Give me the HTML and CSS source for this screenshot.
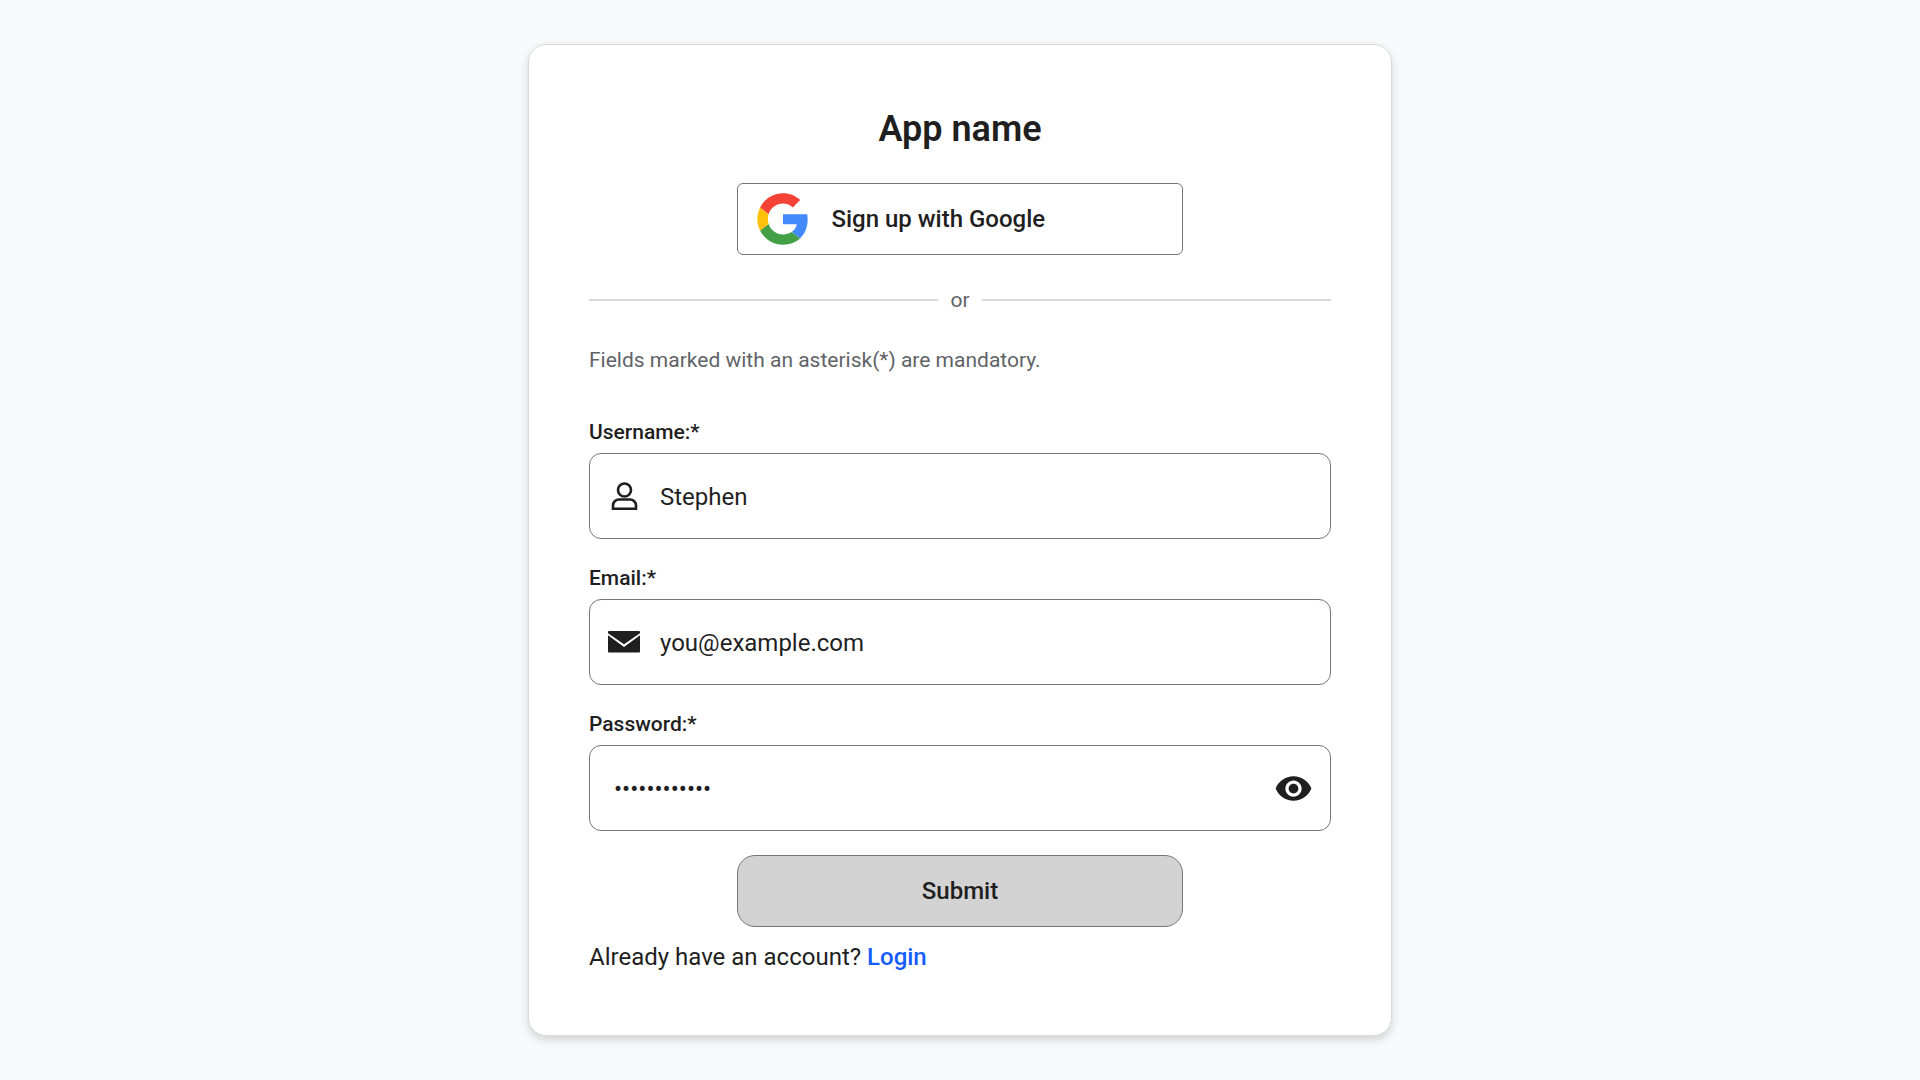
FILE: index.html
```html
<!DOCTYPE html>
<html lang="en">
<head>
<meta charset="utf-8">
<meta name="viewport" content="width=device-width, initial-scale=1">
<title>Sign up</title>
<link rel="stylesheet" href="styles.css">
</head>
<body>
<main class="card">
  <h1 class="title">App name</h1>
  <button class="google" type="button">
    <svg class="google-logo" viewBox="0 0 24 24" aria-hidden="true">
      <path fill="#448aff" d="M22.56 12.25c0-.78-.07-1.53-.2-2.25H12v4.26h5.92c-.26 1.37-1.04 2.53-2.21 3.31l3.57 2.77c2.08-1.92 3.28-4.74 3.28-8.09z"/>
      <path fill="#43a047" d="M12 23c2.97 0 5.46-.98 7.28-2.66l-3.57-2.77c-.98.66-2.23 1.06-3.71 1.06-2.86 0-5.29-1.93-6.16-4.53L2.18 16.93C3.99 20.53 7.7 23 12 23z"/>
      <path fill="#ffc107" d="M5.84 14.09c-.22-.66-.35-1.36-.35-2.09s.13-1.43.35-2.09L2.18 7.07C1.43 8.55 1 10.22 1 12s.43 3.45 1.18 4.93z"/>
      <path fill="#f44336" d="M12 5.38c1.62 0 3.06.56 4.21 1.64l3.15-3.15C17.45 2.09 14.97 1 12 1 7.7 1 3.99 3.47 2.18 7.07l3.66 2.84c.87-2.6 3.3-4.53 6.16-4.53z"/>
    </svg>
    <span>Sign up with Google</span>
  </button>
  <div class="divider">or</div>
  <form class="form">
    <p class="note">Fields marked with an asterisk(*) are mandatory.</p>
    <div class="field">
      <label class="label" for="username">Username:*</label>
      <div class="control">
        <svg class="icon" viewBox="0 0 32 32" fill="none" stroke="currentColor" stroke-width="2.6" aria-hidden="true">
          <circle cx="16.500" cy="10" r="6.500"/>
          <path d="M5 28.700v-3.200a6 6 0 0 1 6-6h11a6 6 0 0 1 6 6v3.200z"/>
        </svg>
        <input class="input" id="username" type="text" value="Stephen">
      </div>
    </div>
    <div class="field">
      <label class="label" for="email">Email:*</label>
      <div class="control">
        <svg class="icon" viewBox="0 0 32 32" fill="currentColor" aria-hidden="true">
          <path d="M1 5h30a1 1 0 0 1 1 1v1.200L16 18.200 0 7.200V6a1 1 0 0 1 1-1zM0 9.200l16 11.800L32 9.200V25.600a1 1 0 0 1-1 1H1a1 1 0 0 1-1-1z"/>
        </svg>
        <input class="input" id="email" type="email" value="you@example.com">
      </div>
    </div>
    <div class="field">
      <label class="label" for="password">Password:*</label>
      <div class="control control-password">
        <input class="input" id="password" type="password" value="password1234">
        <button class="reveal" type="button" aria-label="Show password">
          <svg class="eye" viewBox="0 0 24 24" fill="currentColor" aria-hidden="true">
            <path d="M12 4.500C7 4.500 2.730 7.610 1 12c1.730 4.390 6 7.500 11 7.500s9.270-3.110 11-7.500c-1.730-4.390-6-7.500-11-7.500zM12 17c-2.760 0-5-2.240-5-5s2.240-5 5-5 5 2.240 5 5-2.240 5-5 5zm0-8c-1.660 0-3 1.340-3 3s1.340 3 3 3 3-1.340 3-3-1.340-3-3-3z"/>
          </svg>
        </button>
      </div>
    </div>
    <button class="submit" type="submit">Submit</button>
  </form>
  <p class="login">Already have an account? <a class="link" href="#login">Login</a></p>
</main>
</body>
</html>
```
FILE: styles.css
```css
* {
  box-sizing: border-box;
}

body {
  min-height: 100vh;
  margin: 0;
  display: flex;
  align-items: center;
  justify-content: center;
  background: #f8f9fb;
  color: #1f1f1f;
  font-family: Roboto, "Liberation Sans", sans-serif;
  font-size: 24px;
  line-height: 36px;
}

button,
input {
  color: inherit;
  font: inherit;
}

button {
  cursor: pointer;
}

.card {
  width: 45%;
  min-width: 480px;
  padding: 60px;
  display: flex;
  flex-direction: column;
  border: 1px solid #d8dadd;
  border-radius: 18px;
  background: #fff;
  box-shadow: 0 4px 9px rgba(0, 0, 0, 0.15);
}

.title {
  margin: 0 0 30px;
  font-size: 36px;
  font-weight: 600;
  line-height: 48px;
  text-align: center;
}

.google,
.submit {
  width: 60%;
  height: 72px;
  align-self: center;
  border: 1px solid #757575;
  font-weight: 500;
}

.google {
  padding: 0 17px;
  display: flex;
  align-items: center;
  gap: 20px;
  border-radius: 6px;
  background: #fff;
}

.google-logo {
  width: 56px;
  height: 56px;
  flex: none;
}

.divider {
  margin: 30px 0;
  display: flex;
  align-items: center;
  gap: 12px;
  color: #5f6368;
  font-size: 21px;
  line-height: 30px;
}

.divider::before,
.divider::after {
  content: "";
  height: 2px;
  flex: 1;
  background: #dadae0;
}

.form {
  display: flex;
  flex-direction: column;
}

.note {
  margin: 0 0 40px;
  color: #5f6368;
  font-size: 21px;
  line-height: 30px;
}

.field {
  margin-bottom: 22px;
  display: flex;
  flex-direction: column;
  gap: 4px;
}

.label {
  font-size: 21px;
  font-weight: 500;
  line-height: 34px;
}

.control {
  height: 86px;
  padding: 0 18px;
  display: flex;
  align-items: center;
  gap: 20px;
  border: 1px solid #757575;
  border-radius: 12px;
}

.control-password {
  padding: 0 17px 0 24px;
}

.icon {
  width: 32px;
  height: 32px;
  flex: none;
}

.input {
  min-width: 0;
  padding: 2px 0 0;
  flex: 1;
  border: 0;
  outline: 0;
  background: transparent;
}

.reveal {
  padding: 0;
  display: flex;
  border: 0;
  background: transparent;
}

.eye {
  width: 39px;
  height: 39px;
}

.submit {
  margin-top: 2px;
  border-radius: 18px;
  background: #d3d3d3;
}

.login {
  margin: 12px 0 0;
}

.link {
  color: #155dfc;
  font-weight: 500;
  text-decoration: none;
}
```
